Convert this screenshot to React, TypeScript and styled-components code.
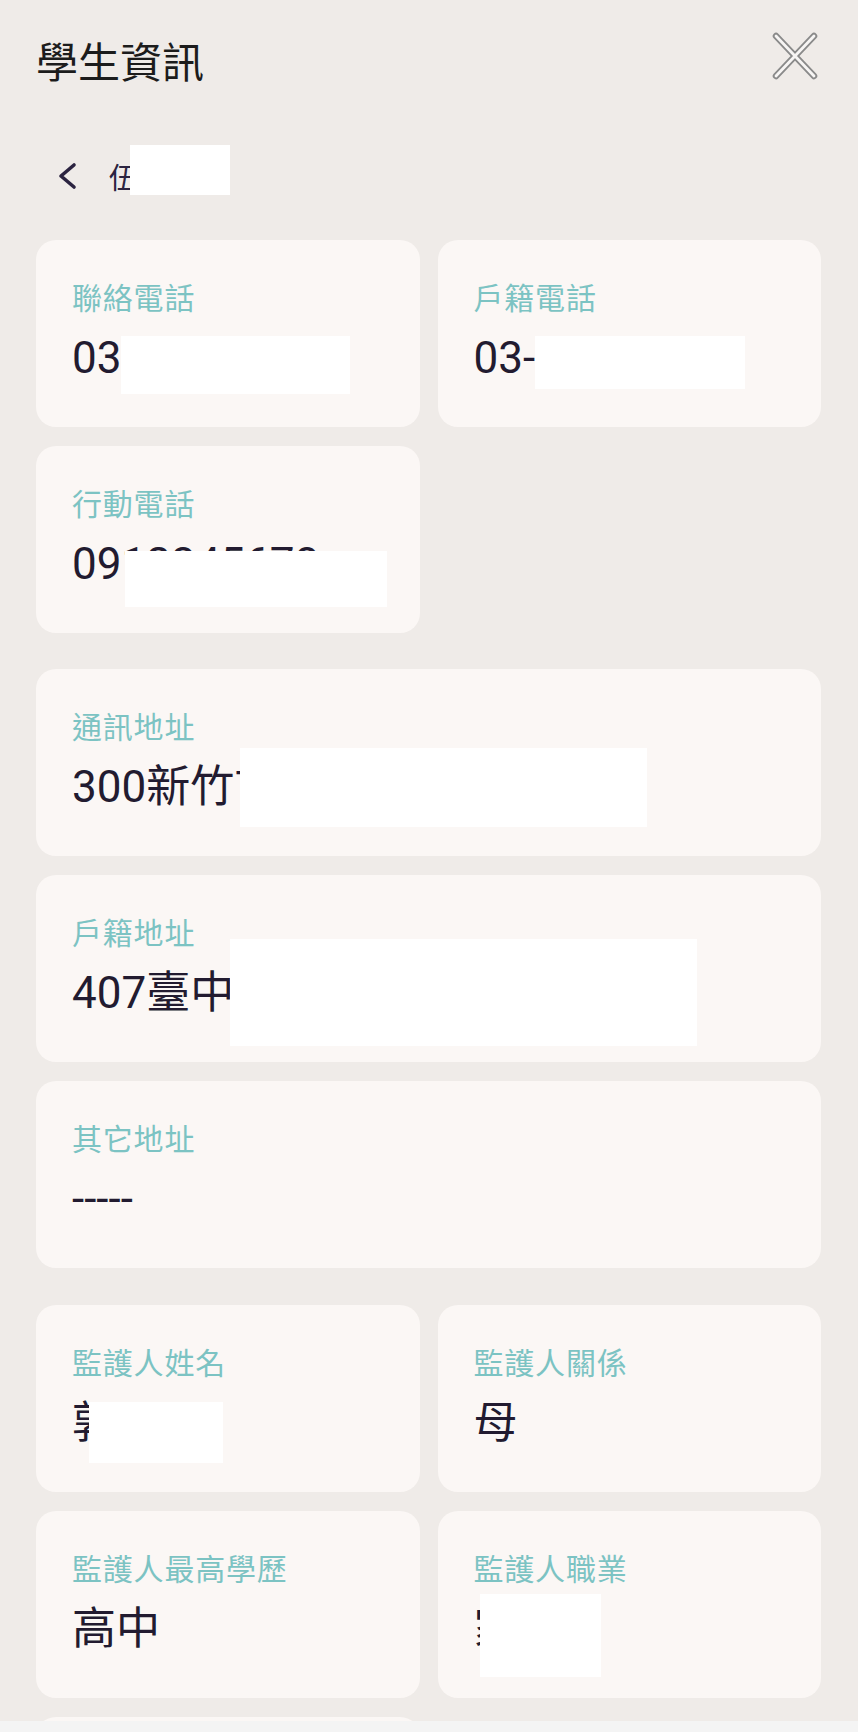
import React from 'react'
import styled, { createGlobalStyle } from 'styled-components'

const GlobalStyle = createGlobalStyle`
  html, body {
    margin: 0;
    padding: 0;
    background: #efebe8;
  }
  body {
    font-family: "Roboto", "Noto Sans CJK TC", sans-serif;
    -webkit-font-smoothing: antialiased;
  }
`

const Screen = styled.div`
  height: 100vh;
  overflow: hidden;
  background: #efebe8;
  padding: 0 37px 0 36px;
  box-sizing: border-box;
`

const Header = styled.header`
  display: flex;
  justify-content: space-between;
  align-items: flex-start;
  padding-top: 36px;
`

const Title = styled.h1`
  margin: 0;
  font-family: "Noto Sans CJK TC", sans-serif;
  font-size: 42px;
  line-height: 48px;
  font-weight: 400;
  color: #1c1c1c;
`

const CloseButton = styled.button`
  border: 0;
  background: none;
  padding: 0;
  margin: -4px 3px 0 0;
  width: 46px;
  height: 48px;
  cursor: pointer;
`

const BackRow = styled.div`
  display: flex;
  align-items: center;
  height: 44px;
  margin-top: 70px;
  padding-left: 21px;
  gap: 32px;
`

const BackName = styled.div`
  display: flex;
  align-items: flex-start;
  height: 44px;
  font-family: "Noto Sans CJK TC", sans-serif;
  font-size: 29px;
  line-height: 44px;
  color: #2b2340;
`

const Section = styled.section<{ $gap: number }>`
  margin-top: ${p => p.$gap}px;
`

const Grid = styled.div`
  display: grid;
  grid-template-columns: 1fr 1fr;
  column-gap: 18px;
  row-gap: 19px;
`

const Stack = styled.div`
  display: flex;
  flex-direction: column;
  gap: 19px;
`

const Card = styled.div`
  background: #fbf7f5;
  border-radius: 20px;
  padding: 38px 36px 43px;
  min-width: 0;
`

const Label = styled.div`
  font-family: "Noto Sans CJK TC", sans-serif;
  font-size: 30px;
  line-height: 36px;
  color: #7cc3c3;
  letter-spacing: 0.8px;
`

const Value = styled.div`
  display: flex;
  align-items: flex-start;
  margin-top: 18px;
  height: 52px;
  font-family: "Roboto", "Noto Sans CJK TC", sans-serif;
  font-size: 44px;
  line-height: 52px;
  color: #221b30;
  white-space: nowrap;
`

const Cover = styled.span<{ $w: number; $h: number; $top: number; $left?: number }>`
  flex: none;
  display: block;
  width: ${p => p.$w}px;
  height: ${p => p.$h}px;
  margin-top: ${p => p.$top}px;
  margin-left: ${p => p.$left ?? 0}px;
  background: #ffffff;
`

type Mask = { w: number; h: number; top: number; left?: number }

const Field: React.FC<{ label: string; value: string; mask?: Mask }> = ({ label, value, mask }) => (
  <Card>
    <Label>{label}</Label>
    <Value>
      <span>{value}</span>
      {mask && <Cover $w={mask.w} $h={mask.h} $top={mask.top} $left={mask.left} />}
    </Value>
  </Card>
)

const BottomBar = styled.div`
  position: fixed;
  left: 0;
  right: 0;
  bottom: 0;
  height: 11px;
  background: #f4f4f4;
`

const CloseIcon = () => (
  <svg width="46" height="48" viewBox="0 0 46 48">
    <g strokeLinecap="round">
      <path d="M4 4 L42 44 M42 4 L4 44" stroke="#8a8a8a" strokeWidth="6.5" />
      <path d="M4 4 L42 44 M42 4 L4 44" stroke="#f7f5f4" strokeWidth="2.8" />
    </g>
  </svg>
)

const ChevronIcon = () => (
  <svg width="20" height="28" viewBox="0 0 20 28">
    <path d="M17 3 L4 14 L17 25" fill="none" stroke="#2b2340" strokeWidth="3.6" strokeLinecap="round" strokeLinejoin="round" />
  </svg>
)

export default function App() {
  return (
    <Screen>
      <GlobalStyle />
      <Header>
        <Title>學生資訊</Title>
        <CloseButton aria-label="關閉">
          <CloseIcon />
        </CloseButton>
      </Header>

      <BackRow>
        <ChevronIcon />
        <BackName>
          <span>伍</span>
          <Cover $w={100} $h={50} $top={-9} $left={-8} />
        </BackName>
      </BackRow>

      <Section $gap={42}>
        <Grid>
          <Field label="聯絡電話" value="03" mask={{ w: 229, h: 58, top: 4, left: 0 }} />
          <Field label="戶籍電話" value="03-" mask={{ w: 210, h: 53, top: 4, left: 0 }} />
          <Field label="行動電話" value="0912345678" mask={{ w: 262, h: 56, top: 13, left: -194 }} />
        </Grid>
      </Section>

      <Section $gap={36}>
        <Stack>
          <Field label="通訊地址" value="300新竹市" mask={{ w: 407, h: 79, top: -13, left: -38 }} />
          <Field label="戶籍地址" value="407臺中" mask={{ w: 467, h: 107, top: -28, left: -4 }} />
          <Field label="其它地址" value="-----" />
        </Stack>
      </Section>

      <Section $gap={37}>
        <Grid>
          <Field label="監護人姓名" value="郭" mask={{ w: 134, h: 61, top: 5, left: -27 }} />
          <Field label="監護人關係" value="母" />
          <Field label="監護人最高學歷" value="高中" />
          <Field label="監護人職業" value="家管" mask={{ w: 121, h: 83, top: -9, left: -82 }} />
          <Field label="監護人電話" value="" />
        </Grid>
      </Section>

      <BottomBar />
    </Screen>
  )
}
